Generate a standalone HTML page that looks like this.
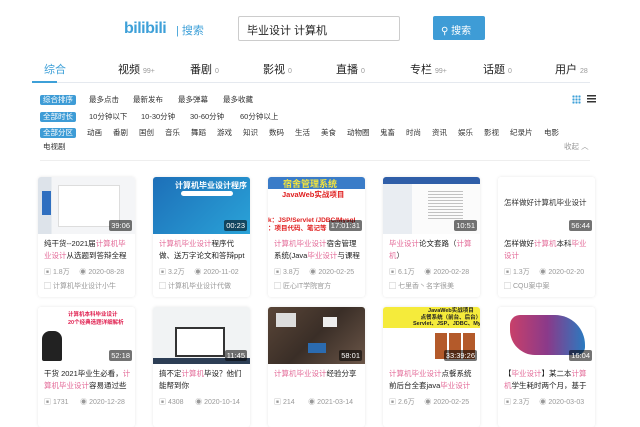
<!DOCTYPE html>
<html><head><meta charset="utf-8"><style>
*{margin:0;padding:0;box-sizing:border-box}
body{width:640px;height:405px;overflow:hidden;background:#fff;font-family:"Liberation Sans","Noto Sans CJK SC",sans-serif;color:#222;position:relative}
.a{position:absolute;white-space:nowrap}
.logo{left:124px;top:20px;font-size:16px;font-weight:bold;color:#3ea0d8;letter-spacing:-0.5px}
.sl{left:176px;top:22px;font-size:11px;color:#3ea0d8}
.box{left:238px;top:16px;width:162px;height:25px;border:1px solid #ccc;border-radius:2px;font-size:11px;padding:5px 8px;color:#222}
.btn{left:433px;top:16px;width:52px;height:24px;background:#3e9cd6;border-radius:2px;color:#fff;font-size:10px;padding:6px 0 0 8px}
.tab{top:61px;font-size:11px;color:#222}
.tab small{font-size:7px;color:#999;margin-left:3px}
.tl{left:32px;top:82px;width:558px;height:1px;background:#e5e9ef}
.tu{left:32px;top:81px;width:25px;height:2px;background:#3ea0d8}
.tag{display:block;font-size:7.5px;line-height:10px;height:10px;background:#3e9cd6;color:#fff;padding:0 3px;border-radius:2px}
.f{font-size:7.5px;line-height:10px;color:#333}
.card{width:97px;height:120px;border-radius:3px;box-shadow:0 0 3px rgba(0,0,0,.1)}
.th{position:absolute;left:0;top:0;width:97px;height:57px;border-radius:3px 3px 0 0;overflow:hidden}
.du{position:absolute;right:3px;bottom:3px;background:rgba(0,0,0,.55);color:#fff;font-size:7.5px;padding:1px 2px;border-radius:2px}
.ti{position:absolute;left:6px;top:61px;width:88px;font-size:7.5px;line-height:12px;white-space:normal;color:#222;height:24px;overflow:hidden}
.ti i{font-style:normal;color:#e46f9b}
.st{position:absolute;left:6px;top:90px;font-size:7px;color:#999}
.up{position:absolute;left:6px;top:104px;font-size:7px;color:#999}
</style></head><body>
<div class="a logo">bilibili</div>
<div class="a sl">| 搜索</div>
<div class="a box">毕业设计 计算机</div>
<div class="a btn">&#9906; 搜索</div>

<div class="a tab" style="left:44px;color:#3ea0d8">综合</div>
<div class="a tab" style="left:118px">视频<small>99+</small></div>
<div class="a tab" style="left:190px">番剧<small>0</small></div>
<div class="a tab" style="left:263px">影视<small>0</small></div>
<div class="a tab" style="left:336px">直播<small>0</small></div>
<div class="a tab" style="left:410px">专栏<small>99+</small></div>
<div class="a tab" style="left:483px">话题<small>0</small></div>
<div class="a tab" style="left:555px">用户<small>28</small></div>
<div class="a tl"></div><div class="a tu"></div>

<div class="a" style="left:40px;top:95px"><span class="tag">综合排序</span></div>
<div class="a f" style="left:89px;top:95px">最多点击</div>
<div class="a f" style="left:133px;top:95px">最新发布</div>
<div class="a f" style="left:178px;top:95px">最多弹幕</div>
<div class="a f" style="left:223px;top:95px">最多收藏</div>
<div class="a" style="left:572px;top:95px;width:9px;height:9px;background:radial-gradient(circle,#3ea0d8 1px,transparent 1.3px) 0 0/3px 3px"></div>
<div class="a" style="left:587px;top:95px;width:9px;height:9px;background:repeating-linear-gradient(#333 0 1.5px,transparent 1.5px 3px)"></div>

<div class="a" style="left:40px;top:112px"><span class="tag">全部时长</span></div>
<div class="a f" style="left:89px;top:112px">10分钟以下</div>
<div class="a f" style="left:141px;top:112px">10-30分钟</div>
<div class="a f" style="left:190px;top:112px">30-60分钟</div>
<div class="a f" style="left:240px;top:112px">60分钟以上</div>

<div class="a" style="left:40px;top:128px"><span class="tag">全部分区</span></div>
<div class="a f" style="left:87px;top:128px">动画</div>
<div class="a f" style="left:113px;top:128px">番剧</div>
<div class="a f" style="left:139px;top:128px">国创</div>
<div class="a f" style="left:165px;top:128px">音乐</div>
<div class="a f" style="left:191px;top:128px">舞蹈</div>
<div class="a f" style="left:217px;top:128px">游戏</div>
<div class="a f" style="left:243px;top:128px">知识</div>
<div class="a f" style="left:269px;top:128px">数码</div>
<div class="a f" style="left:295px;top:128px">生活</div>
<div class="a f" style="left:321px;top:128px">美食</div>
<div class="a f" style="left:347px;top:128px">动物圈</div>
<div class="a f" style="left:380px;top:128px">鬼畜</div>
<div class="a f" style="left:406px;top:128px">时尚</div>
<div class="a f" style="left:432px;top:128px">资讯</div>
<div class="a f" style="left:458px;top:128px">娱乐</div>
<div class="a f" style="left:484px;top:128px">影视</div>
<div class="a f" style="left:510px;top:128px">纪录片</div>
<div class="a f" style="left:544px;top:128px">电影</div>
<div class="a f" style="left:43px;top:142px">电视剧</div>
<div class="a f" style="left:564px;top:142px;color:#999">收起 ︿</div>
<div class="a" style="left:40px;top:160px;width:550px;height:1px;background:#eee"></div>

<!-- row 1 -->
<div class="a card" style="left:38px;top:177px"><div class="th" style="background:linear-gradient(90deg,#dde3ea 0 14%,#f4f5f7 14%)"><div style="position:absolute;left:4px;top:14px;width:9px;height:24px;background:#2f6fc0"></div><div style="position:absolute;left:20px;top:8px;width:62px;height:42px;background:#fff;border:1px solid #ddd"></div><span class="du">39:06</span></div><div class="ti">纯干货--2021届<i>计算机毕业设计</i>从选题到答辩全程详细</div><div class="st">▣ 1.8万 &nbsp;&nbsp;&nbsp; ◉ 2020-08-28</div><div class="up">▢ 计算机毕业设计小牛</div></div>

<div class="a card" style="left:153px;top:177px"><div class="th" style="background:linear-gradient(135deg,#1d6fb8,#2aa3d8)"><div style="position:absolute;left:22px;top:3px;color:#fff;font-size:8px;font-weight:bold">计算机毕业设计程序</div><div style="position:absolute;left:28px;top:14px;width:52px;height:5px;background:#fff;border-radius:3px"></div><span class="du">00:23</span></div><div class="ti"><i>计算机毕业设计</i>程序代做、送万字论文和答辩ppt（java</div><div class="st">▣ 3.2万 &nbsp;&nbsp;&nbsp; ◉ 2020-11-02</div><div class="up">▢ 计算机毕业设计代做</div></div>

<div class="a card" style="left:268px;top:177px"><div class="th" style="background:#fff"><div style="position:absolute;left:0;top:0;width:97px;height:12px;background:#3a7cc8"></div><div style="position:absolute;left:15px;top:0;color:#f5e63b;font-size:9px;font-weight:bold">宿舍管理系统</div><div style="position:absolute;left:14px;top:12px;color:#e02020;font-size:7.5px;font-weight:bold">JavaWeb实战项目</div><div style="position:absolute;left:0;top:37px;color:#e02020;font-size:6.5px;font-weight:bold">k：JSP/Servlet /JDBC/Mysql</div><div style="position:absolute;left:0;top:45px;color:#e02020;font-size:6.5px;font-weight:bold">：项目代码、笔记等</div><span class="du">17:01:31</span></div><div class="ti"><i>计算机毕业设计</i>宿舍管理系统(Java<i>毕业设计</i>与课程设</div><div class="st">▣ 3.8万 &nbsp;&nbsp;&nbsp; ◉ 2020-02-25</div><div class="up">▢ 匠心IT学院官方</div></div>

<div class="a card" style="left:383px;top:177px"><div class="th" style="background:linear-gradient(90deg,#e9edf2 0 30%,#fbfbfb 30%)"><div style="position:absolute;left:0;top:0;width:97px;height:7px;background:#2f5ea8"></div><div style="position:absolute;left:45px;top:14px;width:35px;height:30px;background:repeating-linear-gradient(#888 0 1px,transparent 1px 3px);opacity:.5"></div><span class="du">10:51</span></div><div class="ti"><i>毕业设计</i>论文套路（<i>计算机</i>）</div><div class="st">▣ 6.1万 &nbsp;&nbsp;&nbsp; ◉ 2020-02-28</div><div class="up">▢ 七里香丶名字很美</div></div>

<div class="a card" style="left:498px;top:177px"><div class="th" style="background:#fff"><div style="position:absolute;left:6px;top:20px;font-size:7.5px;color:#333">怎样做好计算机毕业设计</div><span class="du">56:44</span></div><div class="ti">怎样做好<i>计算机</i>本科<i>毕业设计</i></div><div class="st">▣ 1.3万 &nbsp;&nbsp;&nbsp; ◉ 2020-02-20</div><div class="up">▢ CQU案中案</div></div>

<!-- row 2 -->
<div class="a card" style="left:38px;top:307px"><div class="th" style="background:#fff"><div style="position:absolute;left:30px;top:3px;color:#e02050;font-size:5.5px;font-weight:bold">计算机本科毕业设计<br>20个经典选题详细解析</div><div style="position:absolute;left:4px;top:24px;width:20px;height:30px;background:#222;border-radius:8px 8px 2px 2px"></div><span class="du">52:18</span></div><div class="ti">干货 2021毕业生必看，<i>计算机毕业设计</i>容易通过些的</div><div class="st">▣ 1731 &nbsp;&nbsp;&nbsp;&nbsp; ◉ 2020-12-28</div></div>

<div class="a card" style="left:153px;top:307px"><div class="th" style="background:#f1f3f4"><div style="position:absolute;left:22px;top:20px;width:50px;height:30px;background:#222;border:2px solid #333"></div><div style="position:absolute;left:24px;top:22px;width:46px;height:26px;background:#fff"></div><div style="position:absolute;left:0;top:51px;width:97px;height:6px;background:#2d3e55"></div><span class="du">11:45</span></div><div class="ti">搞不定<i>计算机</i>毕设？他们能帮到你</div><div class="st">▣ 4308 &nbsp;&nbsp;&nbsp;&nbsp; ◉ 2020-10-14</div></div>

<div class="a card" style="left:268px;top:307px"><div class="th" style="background:linear-gradient(135deg,#5a4638,#3a2e27 50%,#6b5648)"><div style="position:absolute;left:8px;top:6px;width:20px;height:14px;background:#ddd"></div><div style="position:absolute;left:55px;top:10px;width:14px;height:10px;background:#eee"></div><div style="position:absolute;left:40px;top:36px;width:18px;height:10px;background:#2b6bb0"></div><span class="du">58:01</span></div><div class="ti"><i>计算机毕业设计</i>经验分享</div><div class="st">▣ 214 &nbsp;&nbsp;&nbsp;&nbsp;&nbsp; ◉ 2021-03-14</div></div>

<div class="a card" style="left:383px;top:307px"><div class="th" style="background:#fff"><div style="position:absolute;left:0;top:0;width:97px;height:21px;background:#f5eb3b"></div><div style="position:absolute;left:30px;top:1px;font-size:5.5px;font-weight:bold;line-height:6.5px;text-align:center">JavaWeb实战项目<br>点餐系统（前台、后台）<br>Servlet、JSP、JDBC、Mysql</div><div style="position:absolute;left:52px;top:26px;width:40px;height:26px;background:repeating-linear-gradient(90deg,#b45a2a 0 12px,#fff 12px 14px)"></div><span class="du">33:39:26</span></div><div class="ti"><i>计算机毕业设计</i>点餐系统前后台全套java<i>毕业设计</i>与课</div><div class="st">▣ 2.6万 &nbsp;&nbsp;&nbsp; ◉ 2020-02-25</div></div>

<div class="a card" style="left:498px;top:307px"><div class="th" style="background:#fff"><div style="position:absolute;left:12px;top:8px;width:75px;height:40px;background:linear-gradient(90deg,#c8406a,#8a3a8a 50%,#2a7ac0);border-radius:10px 30px 8px 25px"></div><span class="du">16:04</span></div><div class="ti">【<i>毕业设计</i>】某二本<i>计算机</i>学生耗时两个月，基于</div><div class="st">▣ 2.3万 &nbsp;&nbsp;&nbsp; ◉ 2020-03-03</div></div>
</body></html>
